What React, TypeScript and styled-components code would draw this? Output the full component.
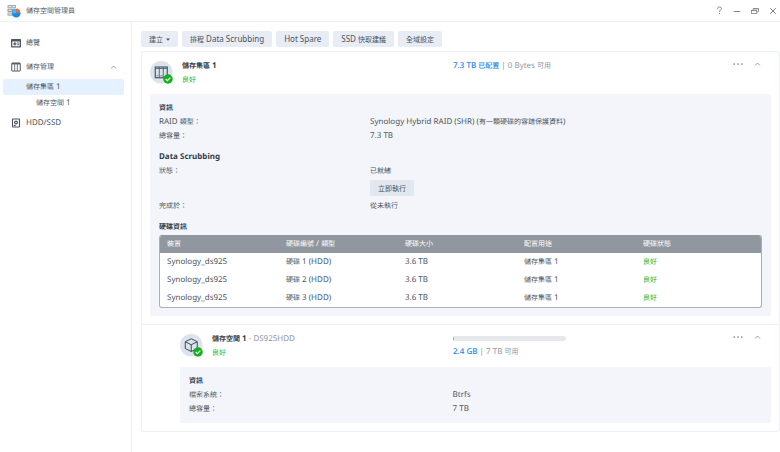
import React from "react";
import styled, { createGlobalStyle, css } from "styled-components";

const ink = "#4b5560";
const strong = "#323d49";
const muted = "#8f979f";
const blue = "#1b86ea";
const green = "#1fb424";
const line = "#edf1f5";
const panel = "#f4f5fa";

const GlobalStyle = createGlobalStyle`
  *, *::before, *::after { box-sizing: border-box; }
  html, body, #root { margin: 0; min-height: 100%; }
  body {
    background: #fff;
    color: ${ink};
    font-family: "Noto Sans", "Noto Sans CJK TC", sans-serif;
    font-size: 7px;
    line-height: 14px;
    text-rendering: geometricPrecision;
  }
  button { font: inherit; color: inherit; border: 0; margin: 0; padding: 0; background: none; cursor: pointer; }
  h1, h2, h3, p, dl, dt, dd, ul { margin: 0; padding: 0; font: inherit; }
  ul { list-style: none; }
  a { color: inherit; text-decoration: none; }
  svg { display: block; flex: none; }
`;

const Latin = styled.span`
  font-size: 8px;
  line-height: 8px;
  white-space: pre-wrap;
`;

/* Latin runs are set one size above the Chinese text around them. */
function Txt({ children }: { children: string }) {
  return (
    <>
      {children.split(/([\x20-\x7e]+)/).map((part, i) =>
        i % 2 ? <Latin key={i}>{part}</Latin> : part
      )}
    </>
  );
}

const Window = styled.div`
  min-height: 100vh;
  display: flex;
  flex-direction: column;
`;

const TitleBar = styled.header`
  height: 22px;
  display: flex;
  align-items: center;
  gap: 5px;
  padding: 0 0 0 7px;
  border-bottom: 1px solid ${line};
`;

const AppTitle = styled.h1`
  flex: 1;
  padding-top: 2px;
  color: ${ink};
`;

const WindowButtons = styled.div`
  display: flex;
  gap: 4px;
  color: #7a838c;
`;

const WindowButton = styled.button`
  width: 14px;
  height: 20px;
  display: flex;
  align-items: center;
  justify-content: center;
`;

const Body = styled.div`
  flex: 1;
  display: flex;
`;

const Sidebar = styled.nav`
  flex: 0 0 132px;
  padding: 9px 7px 0 3px;
  border-right: 1px solid ${line};
`;

const NavLink = styled.a<{ $level: number; $active?: boolean }>`
  display: flex;
  align-items: center;
  gap: 5px;
  height: ${(p) => (p.$level === 0 ? 24 : 16)}px;
  padding: 0 7px 0 ${(p) => [8, 23, 33][p.$level]}px;
  border-radius: 2px;
  ${(p) => p.$active && css`background: #e5f1fe;`}
`;

const NavLabel = styled.span`
  flex: 1;
  padding-top: 1px;
`;

const Main = styled.main`
  flex: 1;
  min-width: 0;
  padding: 9px 0 20px 9px;
`;

const Toolbar = styled.div`
  display: flex;
  gap: 4px;
  margin-bottom: 4px;
`;

const Button = styled.button<{ $deep?: boolean }>`
  display: flex;
  align-items: center;
  gap: 3px;
  height: 16px;
  padding: 1px 8px 0;
  border-radius: 2px;
  background: ${(p) => (p.$deep ? "#e0e7ee" : "#e8ecf4")};
  white-space: nowrap;
`;

const Card = styled.div`
  border: 1px solid ${line};
  border-radius: 2px;
`;

const Section = styled.section<{ $nested?: boolean }>`
  padding: 9px 8px 8px ${(p) => (p.$nested ? 38 : 8)}px;
  ${(p) => p.$nested && css`border-top: 1px solid ${line};`}
`;

const SectionHeader = styled.header`
  display: flex;
  align-items: flex-start;
  height: 33px;
`;

const Badge = styled.span`
  display: block;
  margin-right: 9px;
`;

const Heading = styled.div`
  flex: 1;
  margin-top: -1px;
`;

const Name = styled.h2`
  color: ${strong};
  font-weight: 700;
`;

const Light = styled.span`
  color: ${muted};
  font-weight: 400;
`;

const Status = styled.p`
  color: ${green};
`;

const Usage = styled.div`
  flex: 0 0 279px;
  margin-top: -1px;
  color: ${muted};
`;

const Used = styled.span`
  color: ${blue};
  font-weight: 500;
`;

const Meter = styled.div`
  width: 113px;
  height: 5px;
  margin: 3px 0 5px;
  border-radius: 3px;
  background: #e6e8eb;
  overflow: hidden;
`;

const MeterFill = styled.div`
  height: 100%;
  background: #6db3f4;
`;

const Actions = styled.div`
  flex: 0 0 39px;
  display: flex;
  gap: 9px;
  margin-top: -3px;
  color: #7a838c;
`;

const IconButton = styled.button`
  width: 11px;
  height: 12px;
  display: flex;
  align-items: center;
  justify-content: center;
`;

const Panel = styled.div`
  padding: 8px 9px 6px;
  border-radius: 2px;
  background: ${panel};
`;

const PanelTitle = styled.h3`
  color: ${strong};
  font-weight: 700;
`;

const Facts = styled.dl<{ $label: number }>`
  display: grid;
  grid-template-columns: ${(p) => p.$label}% 1fr;

  &:not(:last-child) { margin-bottom: 7px; }
`;

const RunButton = styled(Button)`
  margin: 1px 0 4px;
`;

const TableFrame = styled.div`
  margin-bottom: 2px;
  border: 1px solid #a9b1b8;
  border-top-color: #91979e;
  border-radius: 3px;
  background: #fff;
  overflow: hidden;
`;

const DiskTable = styled.table`
  width: 100%;
  table-layout: fixed;
  border-collapse: collapse;
  text-align: left;
`;

const Column = styled.col`
  width: 19.8%;
  &:last-child { width: auto; }
`;

const HeadCell = styled.th`
  height: 17px;
  padding: 0 7px;
  background: #91979e;
  color: #fff;
  font-weight: 400;
`;

const Cell = styled.td<{ $good?: boolean }>`
  height: 18px;
  padding: 1px 7px 0;
  color: ${(p) => (p.$good ? green : ink)};
`;

const AppLogo = () => (
  <svg width="14" height="14" viewBox="0 0 28 28">
    <rect x="1" y="2" width="17" height="6.5" rx="1" fill="#a4abb1" />
    <rect x="1" y="9.5" width="17" height="6.5" rx="1" fill="#949ca3" />
    <rect x="1" y="17" width="17" height="6.5" rx="1" fill="#a4abb1" />
    <path d="M3 4h6v2.5H3zM3 11.5h6V14H3zM3 19h6v2.5H3zM11 4h5v2.5h-5z" fill="#e3e7ea" />
    <circle cx="18.500" cy="18.500" r="8.500" fill="#1e84f2" />
    <path d="M18.500 18.500V10a8.500 8.500 0 0 0-8.500 8.500z" fill="#35c3f5" />
    <path d="M18.500 17.500V9a8.500 8.500 0 0 1 8 8.500z" fill="#fb6a2c" />
  </svg>
);

const OverviewIcon = () => (
  <svg width="10" height="10" viewBox="0 0 20 20">
    <rect x="0" y="2" width="20" height="17" rx="1.500" fill={ink} />
    <path d="M2.500 7h15v9.500h-15z" fill="#fff" />
    <path d="M4.500 10.500h2V8.500h2.500v2h2v2.500H9v2H6.500v-2h-2z" fill={ink} />
    <path d="M12.500 9h4v2h-4zM12.500 12.500h4v2h-4z" fill={ink} />
  </svg>
);

const StorageIcon = () => (
  <svg width="10" height="10" viewBox="0 0 20 20" fill="none" stroke={ink}>
    <rect x="1.500" y="2" width="17" height="16" rx="1" strokeWidth="2" />
    <path d="M7.300 3v14M12.700 3v14" strokeWidth="1.600" />
    <path d="M2 3.500h16" strokeWidth="2.500" />
  </svg>
);

const DriveIcon = () => (
  <svg width="10" height="10" viewBox="0 0 20 20">
    <rect x="3" y="2" width="14" height="16" rx="1" fill="none" stroke={ink} strokeWidth="2.200" />
    <circle cx="10" cy="9" r="4" fill={ink} />
    <circle cx="10" cy="9" r="1.600" fill="#fff" />
    <path d="M5.500 14h4v2h-4z" fill={ink} />
  </svg>
);

const Chevron = () => (
  <svg width="7" height="7" viewBox="0 0 14 14" fill="none" stroke="#7a838c" strokeWidth="1.600">
    <path d="M2 9l5-5 5 5" />
  </svg>
);

const Dots = () => (
  <svg width="10" height="4" viewBox="0 0 20 8" fill="#7a838c">
    <circle cx="2.500" cy="4" r="1.700" />
    <circle cx="10" cy="4" r="1.700" />
    <circle cx="17.500" cy="4" r="1.700" />
  </svg>
);

const Check = () => (
  <>
    <circle cx="36" cy="36" r="9.500" fill="#12b01b" />
    <path d="M31.500 36l3.300 3.300 6-6.200" fill="none" stroke="#fff" strokeWidth="2.400" />
  </>
);

const PoolBadge = () => (
  <svg width="23" height="23" viewBox="0 0 46 46">
    <circle cx="22.500" cy="22.500" r="22.500" fill="#dbe3ec" />
    <g fill="none" stroke="#414c58">
      <rect x="10.500" y="12" width="24" height="21.500" strokeWidth="2.200" />
      <path d="M18.500 13v20M26.500 13v20" strokeWidth="1.600" />
      <path d="M11 15h23" strokeWidth="1.500" />
      <path d="M13 29.500h3.500M20.500 29.500H25" strokeWidth="1.200" />
    </g>
    <Check />
  </svg>
);

const VolumeBadge = () => (
  <svg width="23" height="23" viewBox="0 0 46 46">
    <circle cx="22.500" cy="22.500" r="22.500" fill="#dbe3ec" />
    <g fill="none" stroke="#414c58" strokeWidth="2" strokeLinejoin="round">
      <path d="M22.500 9.500l12 6v13.500l-12 6-12-6V15.500z" />
      <path d="M10.500 15.500l12 6 12-6M22.500 21.500V35" />
    </g>
    <Check />
  </svg>
);

const disks = ["1", "2", "3"];

function HeaderActions({ name }: { name: string }) {
  return (
    <Actions>
      <IconButton aria-label={`${name} 更多`}><Dots /></IconButton>
      <IconButton aria-label={`${name} 收合`}><Chevron /></IconButton>
    </Actions>
  );
}

export default function App() {
  return (
    <Window>
      <GlobalStyle />
      <TitleBar>
        <AppLogo />
        <AppTitle>儲存空間管理員</AppTitle>
        <WindowButtons>
          <WindowButton aria-label="說明">
            <svg width="7" height="9" viewBox="0 0 14 18" fill="none" stroke="currentColor" strokeWidth="2">
              <path d="M3.200 5.500C3.200 3 5 2 7 2s3.900 1.100 3.900 3.300C10.900 8 7 8.200 7 11.500" />
              <path d="M7 14v2.300" />
            </svg>
          </WindowButton>
          <WindowButton aria-label="最小化">
            <svg width="8" height="8" viewBox="0 0 16 16" stroke="currentColor" strokeWidth="2">
              <path d="M1.500 9h13" />
            </svg>
          </WindowButton>
          <WindowButton aria-label="還原">
            <svg width="8" height="8" viewBox="0 0 16 16" fill="none" stroke="currentColor" strokeWidth="1.600">
              <path d="M4.500 6V3h10.500v6.500H12" />
              <path d="M4.500 3.600H15" />
              <rect x="1" y="6.500" width="10.500" height="6.500" />
              <path d="M1 7.200h10.500" />
            </svg>
          </WindowButton>
          <WindowButton aria-label="關閉">
            <svg width="8" height="8" viewBox="0 0 16 16" stroke="currentColor" strokeWidth="2">
              <path d="M2.500 2.500l11 11M13.500 2.500l-11 11" />
            </svg>
          </WindowButton>
        </WindowButtons>
      </TitleBar>

      <Body>
        <Sidebar>
          <ul>
            <li><NavLink href="#overview" $level={0}><OverviewIcon /><NavLabel>總覽</NavLabel></NavLink></li>
            <li>
              <NavLink href="#storage" $level={0}>
                <StorageIcon /><NavLabel>儲存管理</NavLabel><Chevron />
              </NavLink>
            </li>
            <li><NavLink href="#pool" $level={1} $active><NavLabel><Txt>儲存集區 1</Txt></NavLabel></NavLink></li>
            <li><NavLink href="#volume" $level={2}><NavLabel><Txt>儲存空間 1</Txt></NavLabel></NavLink></li>
            <li><NavLink href="#drives" $level={0}><DriveIcon /><NavLabel><Txt>HDD/SSD</Txt></NavLabel></NavLink></li>
          </ul>
        </Sidebar>

        <Main>
          <Toolbar>
            <Button>
              建立
              <svg width="4" height="3" viewBox="0 0 8 6"><path d="M0 1h8L4 5.500z" fill={ink} /></svg>
            </Button>
            <Button><span><Txt>排程 Data Scrubbing</Txt></span></Button>
            <Button><span><Txt>Hot Spare</Txt></span></Button>
            <Button><span><Txt>SSD 快取建議</Txt></span></Button>
            <Button>全域設定</Button>
          </Toolbar>

          <Card>
            <Section id="pool">
              <SectionHeader>
                <Badge><PoolBadge /></Badge>
                <Heading>
                  <Name><Txt>儲存集區 1</Txt></Name>
                  <Status>良好</Status>
                </Heading>
                <Usage>
                  <Used><Txt>7.3 TB 已配置</Txt></Used>
                  <Txt>{" | 0 Bytes 可用"}</Txt>
                </Usage>
                <HeaderActions name="儲存集區 1" />
              </SectionHeader>
              <Panel>
                <PanelTitle>資訊</PanelTitle>
                <Facts $label={35}>
                  <dt><Txt>RAID 類型：</Txt></dt>
                  <dd><Txt>Synology Hybrid RAID (SHR) (有一顆硬碟的容錯保護資料)</Txt></dd>
                  <dt>總容量：</dt>
                  <dd><Txt>7.3 TB</Txt></dd>
                </Facts>
                <PanelTitle><Txt>Data Scrubbing</Txt></PanelTitle>
                <Facts $label={35}>
                  <dt>狀態：</dt>
                  <dd>
                    已就緒
                    <RunButton $deep>立即執行</RunButton>
                  </dd>
                  <dt>完成於：</dt>
                  <dd>從未執行</dd>
                </Facts>
                <PanelTitle>硬碟資訊</PanelTitle>
                <TableFrame>
                  <DiskTable>
                    <colgroup><Column /><Column /><Column /><Column /><Column /></colgroup>
                    <thead>
                      <tr>
                        <HeadCell scope="col">裝置</HeadCell>
                        <HeadCell scope="col"><Txt>硬碟編號 / 類型</Txt></HeadCell>
                        <HeadCell scope="col">硬碟大小</HeadCell>
                        <HeadCell scope="col">配置用途</HeadCell>
                        <HeadCell scope="col">硬碟狀態</HeadCell>
                      </tr>
                    </thead>
                    <tbody>
                      {disks.map((n) => (
                        <tr key={n}>
                          <Cell><Txt>Synology_ds925</Txt></Cell>
                          <Cell><Txt>{`硬碟 ${n} (HDD)`}</Txt></Cell>
                          <Cell><Txt>3.6 TB</Txt></Cell>
                          <Cell><Txt>儲存集區 1</Txt></Cell>
                          <Cell $good>良好</Cell>
                        </tr>
                      ))}
                    </tbody>
                  </DiskTable>
                </TableFrame>
              </Panel>
            </Section>

            <Section id="volume" $nested>
              <SectionHeader>
                <Badge><VolumeBadge /></Badge>
                <Heading>
                  <Name><Txt>儲存空間 1</Txt><Light><Txt>{" - DS925HDD"}</Txt></Light></Name>
                  <Status>良好</Status>
                </Heading>
                <Usage>
                  <Meter role="meter" aria-label="已使用空間" aria-valuemin={0} aria-valuemax={100} aria-valuenow={1}>
                    <MeterFill style={{ width: "1%" }} />
                  </Meter>
                  <Used><Txt>2.4 GB</Txt></Used>
                  <Txt>{" | 7 TB 可用"}</Txt>
                </Usage>
                <HeaderActions name="儲存空間 1" />
              </SectionHeader>
              <Panel>
                <PanelTitle>資訊</PanelTitle>
                <Facts $label={46}>
                  <dt>檔案系統：</dt>
                  <dd><Txt>Btrfs</Txt></dd>
                  <dt>總容量：</dt>
                  <dd><Txt>7 TB</Txt></dd>
                </Facts>
              </Panel>
            </Section>
          </Card>
        </Main>
      </Body>
    </Window>
  );
}
